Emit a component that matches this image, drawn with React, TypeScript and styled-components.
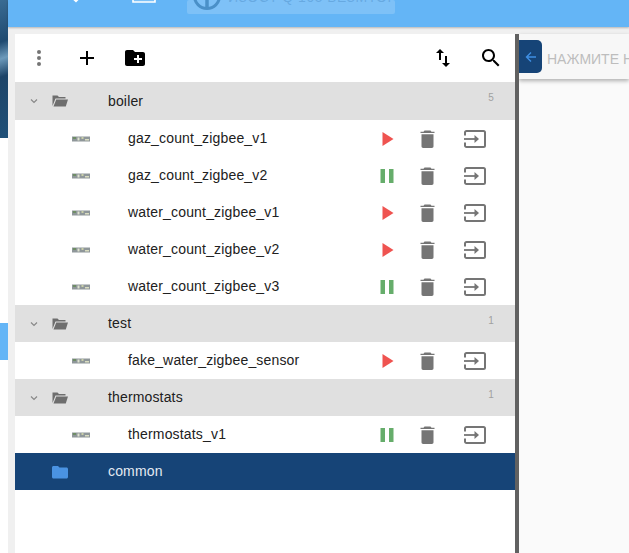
import React from 'react';
import styled, { createGlobalStyle } from 'styled-components';

const Global = createGlobalStyle`
  html, body { margin: 0; padding: 0; height: 100%; }
  body { font-family: "Liberation Sans", Arial, sans-serif; background: #fff; overflow: hidden; }
  #root { height: 100%; }
`;

const Page = styled.div`
  display: flex;
  width: 629px;
  height: 553px;
  overflow: hidden;
`;

const Rail = styled.div`
  width: 8px;
  flex: none;
  display: flex;
  flex-direction: column;
  background: #fff;
`;

const RailImage = styled.div`
  height: 138px;
  background: linear-gradient(160deg, #3a6c93 0%, #1f4a70 30%, #6d9abb 42%, #1d4468 55%, #1f5078 100%);
`;

const RailGap = styled.div`
  height: 185px;
`;

const RailTab = styled.div`
  height: 37px;
  background: #64b5f6;
`;

const Main = styled.div`
  flex: 1;
  min-width: 0;
  display: flex;
  flex-direction: column;
  background: #f0f0f0;
`;

const TopBar = styled.header`
  flex: none;
  height: 27px;
  box-sizing: border-box;
  background: #64b5f6;
  box-shadow: 0 1px 2px rgba(0, 0, 0, 0.25);
  display: flex;
  align-items: flex-start;
  padding-left: 57px;
  overflow: hidden;
  position: relative;
  z-index: 2;
`;

const BarIcon = styled.svg<{ $gap: number; $up: number }>`
  flex: none;
  width: 24px;
  height: 24px;
  margin-top: -${p => p.$up}px;
  margin-right: ${p => p.$gap}px;
`;

const Hint = styled.div`
  flex: none;
  width: 208px;
  height: 14px;
  background: rgba(255, 255, 255, 0.17);
  border-radius: 2px;
  display: flex;
  align-items: flex-end;
  box-sizing: border-box;
  padding: 0 0 4px 6px;
  white-space: nowrap;
  overflow: hidden;
`;

const HintIcon = styled.svg`
  flex: none;
  width: 28px;
  height: 28px;
`;

const HintText = styled.span`
  flex: none;
  margin: 0 0 5px 7px;
  color: rgba(60, 125, 185, 0.35);
  font-size: 14px;
  line-height: 16px;
  letter-spacing: 0.5px;
`;

const Workspace = styled.div`
  flex: 1;
  min-height: 0;
  display: flex;
  padding: 7px 0 0 7px;
`;

const Panel = styled.section`
  width: 500px;
  flex: none;
  background: #fff;
  display: flex;
  flex-direction: column;
`;

const Toolbar = styled.div`
  height: 48px;
  flex: none;
  display: flex;
  align-items: center;
`;

const ToolButton = styled.button<{ $w: number; $push?: boolean }>`
  width: ${p => p.$w}px;
  height: 48px;
  flex: none;
  padding: 0;
  border: 0;
  background: none;
  display: flex;
  align-items: center;
  justify-content: center;
  margin-left: ${p => (p.$push ? 'auto' : '0')};
`;

const FolderRow = styled.div<{ $selected?: boolean; $first?: boolean }>`
  height: ${p => (p.$first ? 38 : 37)}px;
  flex: none;
  display: flex;
  align-items: center;
  background: ${p => (p.$selected ? '#164477' : '#e0e0e0')};
  color: ${p => (p.$selected ? '#e3eaf2' : '#212121')};
  font-size: 14px;
  letter-spacing: 0.15px;
`;

const Chevron = styled.svg`
  width: 12px;
  height: 12px;
  flex: none;
  margin-left: 13px;
`;

const ChevronSpace = styled.div`
  width: 25px;
  flex: none;
`;

const FolderSvg = styled.svg`
  width: 16px;
  height: 14px;
  flex: none;
  margin-left: 12px;
`;

const FolderName = styled.span<{ $first?: boolean }>`
  margin: 0 0 ${p => (p.$first ? 0 : 2)}px 40px;
  flex: 1;
`;

const Count = styled.span`
  align-self: flex-start;
  margin-top: 10px;
  margin-right: 21px;
  font-size: 10px;
  line-height: 12px;
  color: #a0a0a0;
`;

const ItemRow = styled.div`
  height: 37px;
  flex: none;
  display: flex;
  align-items: center;
  color: #212121;
  font-size: 14px;
`;

const DeviceGlyph = styled.svg`
  width: 18px;
  height: 6px;
  flex: none;
  margin-left: 57px;
`;

const ItemName = styled.span`
  margin: 0 0 2px 38px;
  flex: 1;
  letter-spacing: 0.17px;
`;

const ActionSlot = styled.div<{ $w: number }>`
  width: ${p => p.$w}px;
  flex: none;
  display: flex;
  justify-content: center;
  align-items: center;
`;

const ItemEnd = styled.div`
  width: 17px;
  flex: none;
`;

const Splitter = styled.div`
  width: 4px;
  flex: none;
  background: #616161;
  position: relative;
  z-index: 1;
`;

const Side = styled.div`
  flex: 1;
  min-width: 0;
  background: #fafafa;
`;

const SideBar = styled.div`
  height: 45px;
  display: flex;
  align-items: flex-start;
  background: #f7f7f7;
  box-shadow: 0 2px 4px rgba(0, 0, 0, 0.3);
  overflow: hidden;
  white-space: nowrap;
  padding-top: 6px;
  box-sizing: border-box;
`;

const BackButton = styled.div`
  width: 23px;
  height: 33px;
  flex: none;
  background: #164477;
  border-radius: 0 5px 5px 0;
  display: flex;
  align-items: center;
  justify-content: center;
`;

const SideText = styled.span`
  margin: 11px 0 0 5px;
  font-size: 14px;
  line-height: 16px;
  color: #bdbdbd;
`;

const Device = () => (
  <DeviceGlyph viewBox="0 0 18 6">
    <rect x="0" y="0.500" width="18" height="5" fill="#8f979a" />
    <rect x="1" y="1" width="3" height="2" fill="#6f8d66" />
    <rect x="5.500" y="1.500" width="2" height="3" fill="#dfe3d0" />
    <rect x="9.500" y="1" width="2" height="2" fill="#c9cfa8" />
    <rect x="13" y="3" width="4" height="1.500" fill="#d9dcc0" />
  </DeviceGlyph>
);

const OpenFolder = () => (
  <FolderSvg viewBox="0 0 16 14">
    <path d="M0.500 1.500h5l1.500 1.500h6.500v1.600H3.500L0.500 12z" fill="#6e6e6e" />
    <path d="M4.200 5.500H16L13.800 12.500H1.500z" fill="#6e6e6e" />
  </FolderSvg>
);

const ClosedFolder = () => (
  <FolderSvg viewBox="0 0 16 14">
    <path d="M1.500 1h4.500l1.500 1.500h7c.8 0 1.500.7 1.500 1.500V12c0 .8-.7 1.500-1.500 1.500h-13C.700 13.500 0 12.800 0 12V2.500C0 1.700.700 1 1.500 1z" fill="#4a93e2" />
  </FolderSvg>
);

const Down = () => (
  <Chevron viewBox="0 0 12 12">
    <path d="M3 4.500L6 7.500L9 4.500" fill="none" stroke="#888" strokeWidth="1.200" />
  </Chevron>
);

const Play = () => (
  <svg width="14" height="14" viewBox="0 0 14 14">
    <path d="M2.500 0L13.500 7L2.500 14z" fill="#ef5350" />
  </svg>
);

const Pause = () => (
  <svg width="14" height="14" viewBox="0 0 14 14">
    <rect x="0.500" y="0" width="4.500" height="14" fill="#66ad6b" />
    <rect x="9" y="0" width="4.500" height="14" fill="#66ad6b" />
  </svg>
);

const Trash = () => (
  <svg width="15" height="18" viewBox="0 0 15 18">
    <path d="M0.500 1.800h14v1.300h-14zM4.500 0.500h6l1 1.300h-8z" fill="#757575" />
    <path d="M1.500 4.300h12v12c0 .9-.7 1.600-1.600 1.600H3.100c-.9 0-1.600-.7-1.600-1.600z" fill="#757575" />
  </svg>
);

const Enter = () => (
  <svg width="22" height="18" viewBox="0 0 22 18">
    <path d="M1 5.500V2.500C1 1.600 1.600 1 2.500 1h17c.9 0 1.500.6 1.500 1.500v13c0 .9-.6 1.500-1.500 1.500h-17C1.600 17 1 16.400 1 15.500V12.500" fill="none" stroke="#757575" strokeWidth="2" />
    <path d="M0 9h11" stroke="#757575" strokeWidth="1.800" />
    <path d="M10.500 5L15 9L10.500 13z" fill="#757575" />
  </svg>
);

type Item = { name: string; running: boolean };

const Row = ({ name, running }: Item) => (
  <ItemRow>
    <Device />
    <ItemName>{name}</ItemName>
    <ActionSlot $w={30}>{running ? <Pause /> : <Play />}</ActionSlot>
    <ActionSlot $w={50}><Trash /></ActionSlot>
    <ActionSlot $w={46}><Enter /></ActionSlot>
    <ItemEnd />
  </ItemRow>
);

const Group = ({ name, items, first }: { name: string; items: Item[]; first?: boolean }) => (
  <>
    <FolderRow $first={first}>
      <Down />
      <OpenFolder />
      <FolderName $first={first}>{name}</FolderName>
      <Count>{items.length}</Count>
    </FolderRow>
    {items.map(i => <Row key={i.name} {...i} />)}
  </>
);

const groups = [
  {
    name: 'boiler',
    first: true,
    items: [
      { name: 'gaz_count_zigbee_v1', running: false },
      { name: 'gaz_count_zigbee_v2', running: true },
      { name: 'water_count_zigbee_v1', running: false },
      { name: 'water_count_zigbee_v2', running: false },
      { name: 'water_count_zigbee_v3', running: true },
    ],
  },
  { name: 'test', items: [{ name: 'fake_water_zigbee_sensor', running: false }] },
  { name: 'thermostats', items: [{ name: 'thermostats_v1', running: true }] },
];

export default function App() {
  return (
    <Page>
      <Global />
      <Rail>
        <RailImage />
        <RailGap />
        <RailTab />
      </Rail>
      <Main>
        <TopBar>
          <BarIcon $gap={43} $up={19} viewBox="0 0 24 24">
            <path d="M4 15l7 6.500 3-3-7-6.500z" fill="#fff" />
          </BarIcon>
          <BarIcon $gap={31} $up={21} viewBox="0 0 24 24">
            <path d="M1 10v13h22V10" fill="rgba(255,255,255,0.15)" stroke="#fff" strokeWidth="1.600" />
          </BarIcon>
          <Hint>
            <HintIcon viewBox="0 0 28 28">
              <circle cx="14" cy="14" r="12.500" fill="none" stroke="#4a90c8" strokeWidth="3" />
              <path d="M14 8v18" stroke="#4a90c8" strokeWidth="3.500" />
            </HintIcon>
            <HintText>ИЗОСТ Q 105 БЕЗМТОГ</HintText>
          </Hint>
        </TopBar>
        <Workspace>
          <Panel>
            <Toolbar>
              <ToolButton $w={48}>
                <svg width="24" height="24" viewBox="0 0 24 24" fill="#757575">
                  <circle cx="12" cy="6" r="2" /><circle cx="12" cy="12" r="2" /><circle cx="12" cy="18" r="2" />
                </svg>
              </ToolButton>
              <ToolButton $w={48}>
                <svg width="24" height="24" viewBox="0 0 24 24" fill="#000">
                  <path d="M19 13h-6v6h-2v-6H5v-2h6V5h2v6h6z" />
                </svg>
              </ToolButton>
              <ToolButton $w={48}>
                <svg width="24" height="24" viewBox="0 0 24 24" fill="#000">
                  <path d="M20 6h-8l-2-2H4c-1.110 0-1.990.89-1.990 2L2 18c0 1.110.89 2 2 2h16c1.110 0 2-.89 2-2V8c0-1.110-.89-2-2-2zm-1 8h-3v3h-2v-3h-3v-2h3V9h2v3h3v2z" />
                </svg>
              </ToolButton>
              <ToolButton $w={48} $push>
                <svg width="24" height="24" viewBox="0 0 24 24" fill="#000">
                  <path d="M9 3L5 7h3v7h2V7h3zM16 17v-7h-2v7h-3l4 4 4-4z" />
                </svg>
              </ToolButton>
              <ToolButton $w={48}>
                <svg width="24" height="24" viewBox="0 0 24 24" fill="#000">
                  <path d="M15.500 14h-.79l-.28-.27C15.410 12.590 16 11.110 16 9.500 16 5.910 13.090 3 9.500 3S3 5.910 3 9.500 5.910 16 9.500 16c1.610 0 3.090-.59 4.230-1.570l.27.28v.79l5 4.990L20.490 19l-4.990-5zm-6 0C7.010 14 5 11.990 5 9.500S7.010 5 9.500 5 14 7.010 14 9.500 11.990 14 9.500 14z" />
                </svg>
              </ToolButton>
            </Toolbar>
            {groups.map(g => <Group key={g.name} {...g} />)}
            <FolderRow $selected>
              <ChevronSpace />
              <ClosedFolder />
              <FolderName>common</FolderName>
            </FolderRow>
          </Panel>
          <Splitter />
          <Side>
            <SideBar>
              <BackButton>
                <svg width="14" height="14" viewBox="0 0 14 14">
                  <path d="M12 7H3M7 2.500L2.500 7L7 11.500" fill="none" stroke="#3f8fe4" strokeWidth="1.400" />
                </svg>
              </BackButton>
              <SideText>НАЖМИТЕ НА ЭЛЕМЕНТ</SideText>
            </SideBar>
          </Side>
        </Workspace>
      </Main>
    </Page>
  );
}
